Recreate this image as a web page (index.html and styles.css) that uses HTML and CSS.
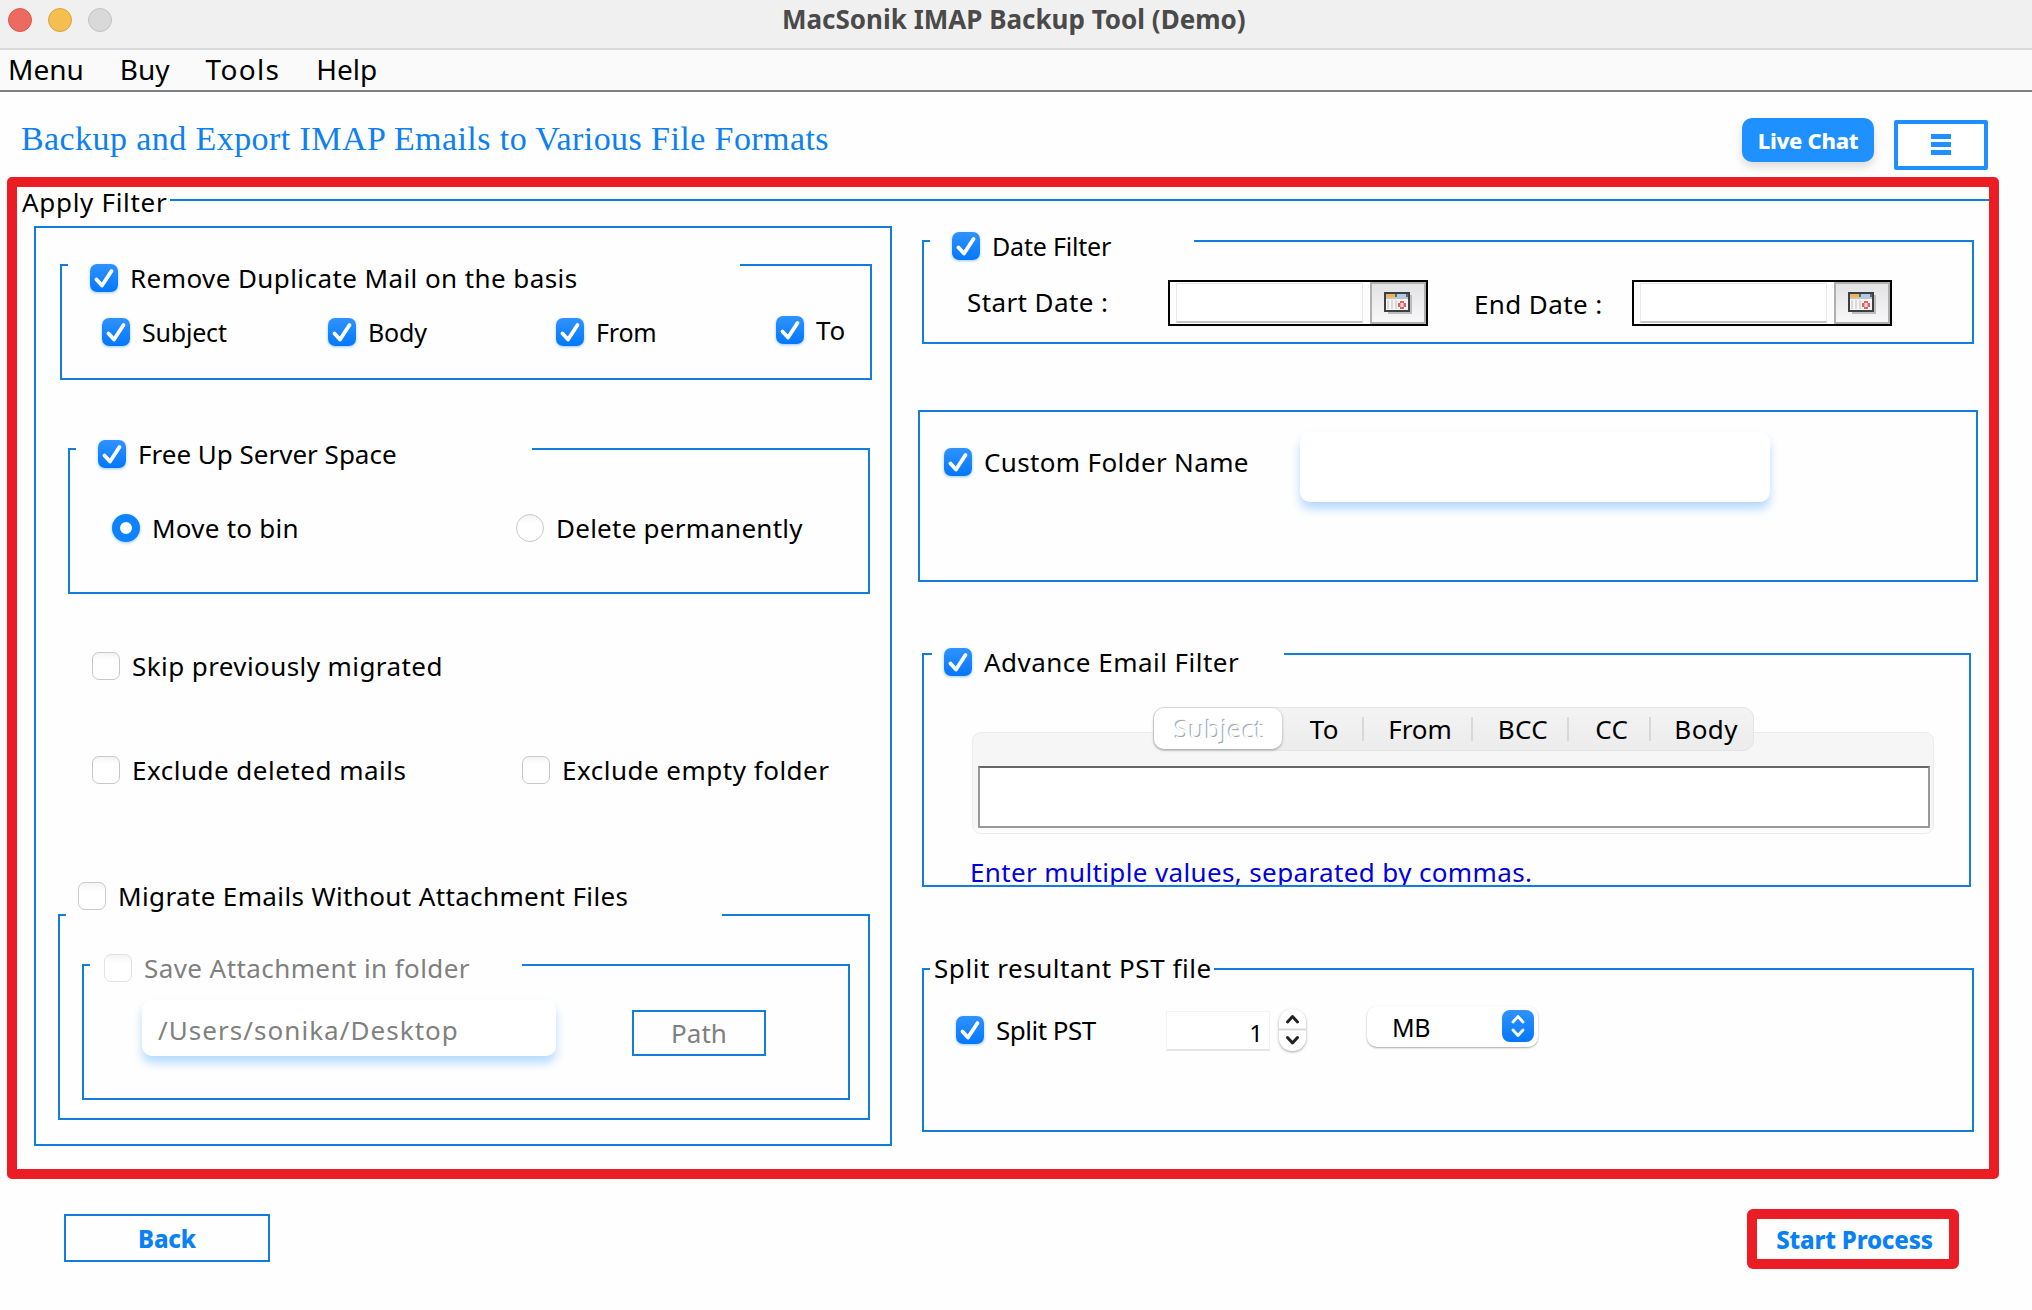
FILE: index.html
```html
<!DOCTYPE html>
<html lang="en">
  <head>
    <meta charset="UTF-8" />
    <title>MacSonik IMAP Backup Tool (Demo)</title>
    <link rel="stylesheet" href="styles.css" />
  </head>
  <body>
    <div class="titlebar">
      <div class="lights">
        <span class="light close"></span>
        <span class="light minimize"></span>
        <span class="light zoom"></span>
      </div>
      <span class="window-title">MacSonik IMAP Backup Tool (Demo)</span>
    </div>
    <nav class="menubar">
      <span class="menu-item">Menu</span>
      <span class="menu-item">Buy</span>
      <span class="menu-item tools">Tools</span>
      <span class="menu-item">Help</span>
    </nav>

    <header class="page-head">
      <h1>Backup and Export IMAP Emails to Various File Formats</h1>
      <button class="live-chat">Live Chat</button>
      <button class="burger">
        <svg width="20" height="22" viewBox="0 0 20 22">
          <path d="M0 2.5h20M0 10.5h20M0 18.5h20" stroke="#1e90ff" stroke-width="5" />
        </svg>
      </button>
    </header>

    <!-- shared control glyphs -->
    <svg class="defs" width="0" height="0">
      <defs>
        <symbol id="tick" viewBox="0 0 28 28">
          <path d="M6.500 15.500l5.500 6L21.500 7" fill="none" stroke="#fff" stroke-width="3.800" stroke-linecap="round" stroke-linejoin="round" />
        </symbol>
        <symbol id="calendar" viewBox="0 0 28 22">
          <path d="M4 3h24v19H4z" fill="#bdbdbd" />
          <path d="M1 1h24v18H1z" fill="#f4f4f4" stroke="#3c3f45" stroke-width="2" />
          <path d="M2 2h9v3H2z" fill="#f0b64c" />
          <path d="M11 2h2v3h-2z" fill="#666" />
          <path d="M13 2h9v3h-9z" fill="#a8cdf0" />
          <path d="M22 2h2v3h-2z" fill="#666" />
          <path d="M2 5h22v2H2z" fill="#c4c4c4" />
          <path d="M4 8v9M8 8v9M12 8v9" stroke="#dedad8" stroke-width="2" />
          <path d="M16 9h4v2h2v4h-2v2h-4v-2h-2v-4h2z" fill="#dc6464" />
          <path d="M16.500 11h3v4h-3z" fill="#f6dede" />
        </symbol>
      </defs>
    </svg>

    <main class="filter-frame">
      <div class="frame-title"><span>Apply Filter</span></div>
      <div class="columns">
        <section class="left-panel">
          <div class="group duplicates">
            <div class="group-head">
              <label class="check on"><svg class="box"><use href="#tick" /></svg>Remove Duplicate Mail on the basis</label>
            </div>
            <div class="basis-row">
              <label class="check on"><svg class="box"><use href="#tick" /></svg>Subject</label>
              <label class="check on"><svg class="box"><use href="#tick" /></svg>Body</label>
              <label class="check on"><svg class="box"><use href="#tick" /></svg>From</label>
              <label class="check on raised"><svg class="box"><use href="#tick" /></svg>To</label>
            </div>
          </div>

          <div class="group server-space">
            <div class="group-head">
              <label class="check on"><svg class="box"><use href="#tick" /></svg>Free Up Server Space</label>
            </div>
            <div class="radio-row">
              <label class="check"><span class="radio selected"></span>Move to bin</label>
              <label class="check"><span class="radio"></span>Delete permanently</label>
            </div>
          </div>

          <label class="check skip"><span class="box"></span>Skip previously migrated</label>
          <div class="exclude-row">
            <label class="check"><span class="box"></span>Exclude deleted mails</label>
            <label class="check"><span class="box"></span>Exclude empty folder</label>
          </div>

          <label class="check migrate"><span class="box"></span>Migrate Emails Without Attachment Files</label>
          <div class="group attachments">
            <div class="border-gap"></div>
            <div class="group save-folder">
              <div class="group-head">
                <label class="check disabled"><span class="box"></span>Save Attachment in folder</label>
              </div>
              <div class="path-row">
                <div class="soft-field">/Users/sonika/Desktop</div>
                <button class="outline-btn path-btn">Path</button>
              </div>
            </div>
          </div>
        </section>

        <section class="right-column">
          <div class="group dates">
            <div class="group-head">
              <label class="check on"><svg class="box"><use href="#tick" /></svg>Date Filter</label>
            </div>
            <div class="date-row">
              <span class="date-label start">Start Date :</span>
              <div class="date-field">
                <span class="date-input"></span>
                <button class="date-btn"><svg width="28" height="22"><use href="#calendar" /></svg></button>
              </div>
              <span class="date-label end">End Date :</span>
              <div class="date-field">
                <span class="date-input"></span>
                <button class="date-btn"><svg width="28" height="22"><use href="#calendar" /></svg></button>
              </div>
            </div>
          </div>

          <div class="group custom-folder">
            <label class="check on"><svg class="box"><use href="#tick" /></svg>Custom Folder Name</label>
            <div class="soft-field"></div>
          </div>

          <div class="group email-filter">
            <div class="group-head">
              <label class="check on"><svg class="box"><use href="#tick" /></svg>Advance Email Filter</label>
            </div>
            <div class="tabs">
              <span class="tab active">Subject</span>
              <span class="tab">To</span>
              <span class="tab">From</span>
              <span class="tab">BCC</span>
              <span class="tab">CC</span>
              <span class="tab">Body</span>
            </div>
            <div class="tab-panel"><div class="tab-input"></div></div>
            <p class="hint">Enter multiple values, separated by commas.</p>
          </div>

          <div class="group split">
            <div class="group-head">Split resultant PST file</div>
            <div class="split-row">
              <label class="check on"><svg class="box"><use href="#tick" /></svg>Split PST</label>
              <span class="spin-value">1</span>
              <span class="stepper">
                <svg width="27" height="42" viewBox="0 0 27 42">
                  <path d="M0 20.500h27" stroke="#d8d8d8" stroke-width="2" />
                  <path d="M8.500 13l5-5.500 5 5.500M8.500 28.500l5 5.500 5-5.500" fill="none" stroke="#222" stroke-width="3" stroke-linecap="round" stroke-linejoin="round" />
                </svg>
              </span>
              <span class="combo">
                MB
                <svg class="combo-arrows" width="32" height="32" viewBox="0 0 32 32">
                  <path d="M11 12l5-5.500 5 5.500M11 20l5 5.500 5-5.500" fill="none" stroke="#fff" stroke-width="2.800" stroke-linecap="round" stroke-linejoin="round" />
                </svg>
              </span>
            </div>
          </div>
        </section>
      </div>
    </main>

    <footer class="actions">
      <button class="outline-btn back-btn">Back</button>
      <button class="start-btn">Start Process</button>
    </footer>
  </body>
</html>
```
FILE: styles.css
```css
* {
  box-sizing: border-box;
}

body {
  background-color: #fefefe;
  color: #000;
  font-family: "Noto Sans", "Open Sans", sans-serif;
  font-size: 26px;
  height: 1310px;
  margin: 0;
  overflow: hidden;
  width: 2032px;
}

button {
  font-family: inherit;
  margin: 0;
  padding: 0;
}

.titlebar {
  align-items: flex-start;
  background-color: #f0f0f0;
  border-bottom: 2px solid #d8d8d8;
  display: flex;
  height: 50px;
}

.lights {
  display: flex;
  gap: 16px;
  padding: 8px 0 0 8px;
  width: 782px;
}

.light {
  border: 1px solid #d85a50;
  border-radius: 50%;
  height: 24px;
  width: 24px;
}

.close {
  background-color: #ed6a5e;
}

.minimize {
  background-color: #f4bf4f;
  border-color: #d6a243;
}

.zoom {
  background-color: #d9d9d9;
  border-color: #c2c2c2;
}

.window-title {
  color: #4a4a4a;
  font-size: 26px;
  font-weight: 700;
  line-height: 38px;
}

.menubar {
  background-color: #fafafa;
  border-bottom: 2px solid #808080;
  display: flex;
  font-size: 28px;
  gap: 36px;
  height: 42px;
  line-height: 39px;
  padding-left: 8px;
}

.tools {
  letter-spacing: 1.3px;
}

.page-head {
  align-items: flex-start;
  display: flex;
  height: 85px;
  padding-left: 21px;
}

h1 {
  color: #0d80f2;
  font-family: "Liberation Serif", serif;
  font-size: 34px;
  font-weight: 400;
  letter-spacing: 0.42px;
  line-height: 38px;
  margin: 28px 0 0;
  white-space: nowrap;
  width: 1721px;
}

.live-chat {
  background-color: #1e90ff;
  border: none;
  border-radius: 10px;
  box-shadow: 0 5px 10px rgba(0, 0, 0, 0.14);
  color: #fff;
  font-size: 22px;
  font-weight: 800;
  height: 44px;
  letter-spacing: -0.3px;
  margin-top: 26px;
  width: 132px;
}

.burger {
  align-items: center;
  background-color: #fff;
  border: 4px solid #1e90ff;
  border-radius: 2px;
  display: flex;
  height: 50px;
  justify-content: center;
  margin: 28px 0 0 20px;
  width: 94px;
}

.defs {
  display: block;
}

.filter-frame {
  border: 10px solid #ec1c24;
  border-radius: 5px;
  height: 1002px;
  margin-left: 7px;
  width: 1992px;
}

.frame-title {
  align-items: center;
  display: flex;
  height: 26px;
}

.frame-title span {
  letter-spacing: 0.7px;
  line-height: 26px;
  margin: 3px 3px 0 5px;
}

.frame-title::after {
  background-color: #127ddc;
  content: "";
  flex-grow: 1;
  height: 2px;
}

.columns {
  align-items: flex-start;
  display: flex;
  gap: 26px;
  padding-left: 17px;
}

.left-panel {
  border: 2px solid #127ddc;
  height: 920px;
  letter-spacing: 0.42px;
  margin-top: 13px;
  width: 858px;
}

.group {
  border: 2px solid #127ddc;
}

/* white strip that opens the top border behind the group's title */
.group-head {
  background-color: #fefefe;
  height: 28px;
  line-height: 28px;
  margin-left: 6px;
  padding-left: 22px;
  white-space: nowrap;
}

.check {
  display: flex;
  gap: 12px;
  height: 28px;
  line-height: 28px;
  white-space: nowrap;
}

.box,
.radio {
  background: linear-gradient(#f4f4f4, #fff 30%);
  border: 1px solid #c8c8c8;
  border-radius: 7px;
  flex-shrink: 0;
  height: 28px;
  width: 28px;
}

.on .box {
  background: linear-gradient(#2f93ff, #0477fb);
  border: none;
  box-shadow: 0 1px 3px rgba(0, 122, 255, 0.4);
}

.radio {
  border-radius: 50%;
}

.radio.selected {
  background: #fff;
  border: 8px solid #0f82ff;
  box-shadow: 0 1px 3px rgba(0, 122, 255, 0.4);
}

.disabled {
  color: #808080;
}

.disabled .box {
  border-color: #e2e2e2;
}

.duplicates {
  height: 116px;
  margin: 36px 0 0 24px;
  width: 812px;
}

.duplicates .group-head {
  margin-top: -2px;
  width: 672px;
}

.basis-row {
  display: grid;
  font-size: 25px;
  grid-template-columns: 226px 228px 220px auto;
  letter-spacing: -0.2px;
  padding: 26px 0 0 40px;
}

.raised {
  font-size: 26px;
  letter-spacing: 0.8px;
  margin-top: -2px;
}

.server-space {
  height: 146px;
  margin: 68px 0 0 32px;
  width: 802px;
}

.server-space .group-head {
  letter-spacing: 0;
  margin-top: -10px;
  width: 456px;
}

.radio-row {
  display: grid;
  grid-template-columns: 404px auto;
  letter-spacing: 0.25px;
  padding: 46px 0 0 42px;
}

.skip {
  margin: 58px 0 0 56px;
}

.exclude-row {
  display: grid;
  grid-template-columns: 430px auto;
  letter-spacing: 0.5px;
  padding: 76px 0 0 56px;
}

.migrate {
  letter-spacing: 0.37px;
  margin: 98px 0 0 42px;
}

.attachments {
  height: 206px;
  margin: 4px 0 0 22px;
  width: 812px;
}

.border-gap {
  background-color: #fefefe;
  height: 2px;
  margin: -2px 0 0 6px;
  width: 656px;
}

.save-folder {
  height: 136px;
  margin: 48px 0 0 22px;
  width: 768px;
}

.save-folder .group-head {
  margin-top: -12px;
  padding-left: 14px;
  width: 432px;
}

.path-row {
  display: flex;
  padding: 18px 0 0 58px;
}

.soft-field {
  background-color: #fff;
  border-radius: 10px;
  box-shadow: 0 7px 10px rgba(30, 144, 255, 0.32);
  color: #808080;
  height: 56px;
  letter-spacing: 1.05px;
  line-height: 60px;
  padding-left: 16px;
  width: 414px;
}

.outline-btn {
  background-color: #fefefe;
  border: 2px solid #127ddc;
}

.path-btn {
  color: #808080;
  font-size: 26px;
  height: 46px;
  margin: 10px 0 0 76px;
  width: 134px;
}

.right-column {
  width: 1060px;
}

.dates {
  height: 104px;
  margin: 27px 0 0 4px;
  width: 1052px;
}

.dates .group-head {
  font-size: 25px;
  letter-spacing: -0.2px;
  margin-top: -10px;
  width: 264px;
}

.date-row {
  display: flex;
  letter-spacing: 0.4px;
  padding: 20px 0 0 43px;
}

.date-label {
  white-space: nowrap;
}

.date-label.start {
  line-height: 44px;
  width: 201px;
}

.date-label.end {
  line-height: 48px;
  margin-left: 46px;
  width: 158px;
}

.date-field {
  background-color: #fff;
  border: 2px solid #000;
  display: flex;
  height: 46px;
  width: 260px;
}

.date-input {
  border: 1px solid #e8e8e8;
  border-bottom: 2px solid #c4c4c4;
  height: 40px;
  margin: 1px 7px 0 6px;
  width: 187px;
}

.date-btn {
  align-items: center;
  background: linear-gradient(#e2e2e2, #f8f8f8);
  border: 2px solid #b0b0b0;
  display: flex;
  height: 42px;
  justify-content: center;
  width: 56px;
}

.custom-folder {
  align-items: flex-start;
  display: flex;
  height: 172px;
  margin-top: 66px;
  padding: 20px 0 0 24px;
}

.custom-folder .check {
  letter-spacing: 0.35px;
  margin-top: 16px;
  width: 356px;
}

.custom-folder .soft-field {
  height: 70px;
  width: 470px;
}

.email-filter {
  height: 234px;
  margin: 71px 0 0 4px;
  width: 1049px;
}

.email-filter .group-head {
  letter-spacing: 0.48px;
  margin: -7px 0 0 8px;
  padding-left: 12px;
  width: 352px;
}

.tabs {
  background: linear-gradient(rgba(242, 242, 242, 0.9), rgba(235, 235, 235, 0.9));
  border: 1px solid #e4e4e4;
  border-radius: 11px;
  display: flex;
  height: 44px;
  letter-spacing: 0.4px;
  line-height: 42px;
  margin: 31px 0 0 229px;
  position: relative;
  width: 601px;
}

.tab {
  background: linear-gradient(#d8d8d8, #d8d8d8) right center / 2px 24px no-repeat;
  padding-left: 3px;
  text-align: center;
  width: 82px;
}

.tab:nth-child(3) {
  letter-spacing: 0;
  width: 110px;
}

.tab:nth-child(4) {
  width: 96px;
}

.tab:last-child {
  background: none;
  padding-left: 8px;
  width: 102px;
}

.tab.active {
  background: #fff;
  border-radius: 10px;
  box-shadow: 0 1px 3px rgba(0, 0, 0, 0.35);
  color: #fff;
  height: 41px;
  letter-spacing: 0;
  text-shadow: -1px -1px 1px #9a9a9a;
  width: 128px;
}

.tab-panel {
  background: linear-gradient(#f6f6f6 92%, #fefefe);
  border: 1px solid #ebebeb;
  border-radius: 9px;
  height: 102px;
  margin: -19px 0 0 48px;
  padding: 33px 0 0 5px;
  width: 962px;
}

.tab-input {
  background-color: #fff;
  border: 2px solid #999;
  border-top-color: #666;
  height: 62px;
  width: 952px;
}

.hint {
  color: #0000e0;
  height: 27px;
  letter-spacing: 0.37px;
  line-height: 28px;
  margin: 24px 0 0 46px;
  overflow: hidden;
}

.split {
  height: 164px;
  margin: 81px 0 0 4px;
  width: 1052px;
}

.split .group-head {
  letter-spacing: 0.56px;
  margin-top: -16px;
  padding-left: 4px;
  width: 284px;
}

.split-row {
  align-items: flex-start;
  display: flex;
  padding: 24px 0 0 32px;
}

.split-row .check {
  letter-spacing: -0.5px;
  margin-top: 10px;
  width: 210px;
}

.spin-value {
  background-color: #fff;
  border: 1px solid #f3f3f3;
  border-bottom: 2px solid #e4e4e4;
  font-size: 24px;
  height: 40px;
  line-height: 41px;
  margin-top: 5px;
  padding-right: 6px;
  text-align: right;
  width: 104px;
}

.stepper {
  background-color: #fff;
  border-radius: 13px;
  box-shadow: 0 1px 3px rgba(0, 0, 0, 0.35);
  height: 42px;
  margin: 3px 0 0 9px;
  width: 27px;
}

.stepper svg {
  display: block;
}

.combo {
  align-items: flex-start;
  background-color: #fff;
  border-radius: 10px;
  box-shadow: 0 1px 2px rgba(0, 0, 0, 0.35);
  display: flex;
  font-size: 25px;
  height: 41px;
  justify-content: space-between;
  letter-spacing: -0.4px;
  line-height: 42px;
  margin-left: 61px;
  padding: 0 4px 0 25px;
  width: 171px;
}

.combo-arrows {
  background: linear-gradient(#2f93ff, #0477fb);
  border-radius: 8px;
  margin-top: 4px;
}

.actions {
  align-items: flex-start;
  color: #0a80f5;
  display: flex;
}

.actions button {
  color: inherit;
  font-size: 24px;
  font-weight: 800;
  letter-spacing: -0.2px;
}

.actions .back-btn {
  height: 48px;
  margin: 35px 0 0 64px;
  width: 206px;
}

.actions .start-btn {
  background-color: #fefefe;
  border: 10px solid #ec1c24;
  border-radius: 6px;
  height: 60px;
  margin: 30px 0 0 1477px;
  padding-left: 3px;
  width: 212px;
}
```
